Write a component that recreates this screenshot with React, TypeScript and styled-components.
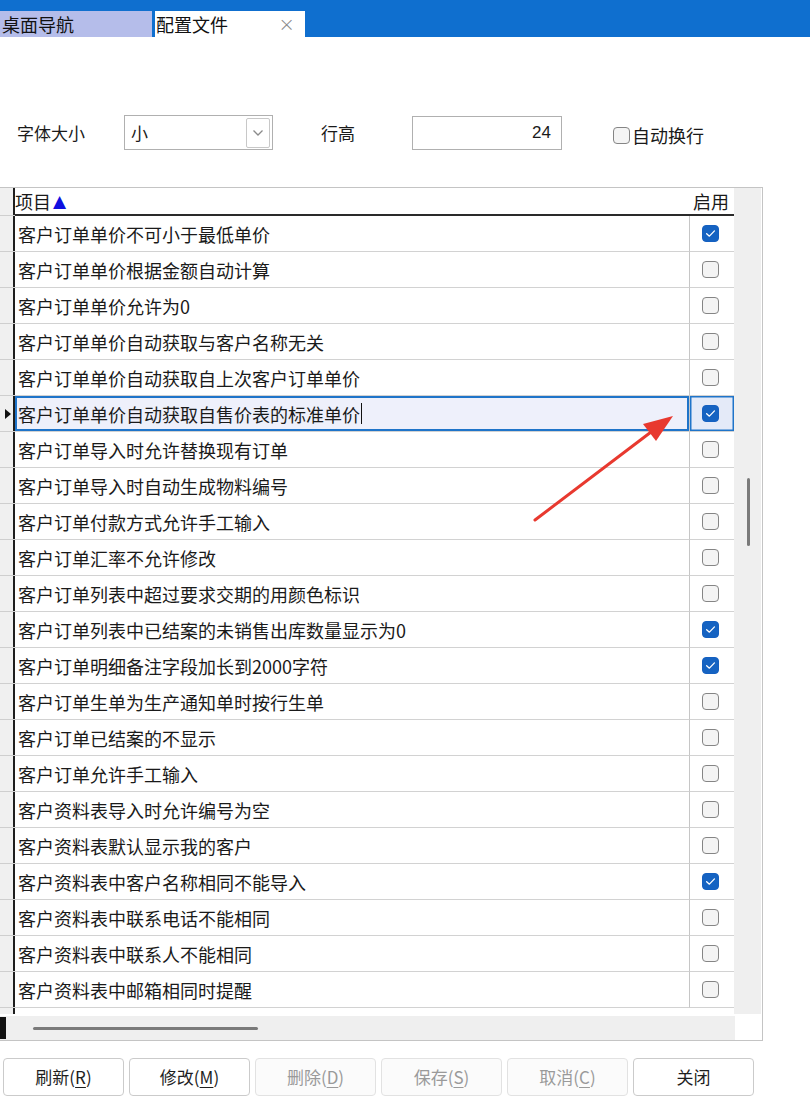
import * as React from "react";
import styled, { createGlobalStyle } from "styled-components";

const FONT = `"Noto Sans CJK SC", "Noto Sans", "Liberation Sans", sans-serif`;
const ROW_HEIGHT = 36;
const BLUE = "#0f6fcf";
const SELECT_BLUE = "#1f74c9";

interface OptionRow {
  label: string;
  enabled: boolean;
}

const rows: OptionRow[] = [
  { label: "客户订单单价不可小于最低单价", enabled: true },
  { label: "客户订单单价根据金额自动计算", enabled: false },
  { label: "客户订单单价允许为0", enabled: false },
  { label: "客户订单单价自动获取与客户名称无关", enabled: false },
  { label: "客户订单单价自动获取自上次客户订单单价", enabled: false },
  { label: "客户订单单价自动获取自售价表的标准单价", enabled: true },
  { label: "客户订单导入时允许替换现有订单", enabled: false },
  { label: "客户订单导入时自动生成物料编号", enabled: false },
  { label: "客户订单付款方式允许手工输入", enabled: false },
  { label: "客户订单汇率不允许修改", enabled: false },
  { label: "客户订单列表中超过要求交期的用颜色标识", enabled: false },
  { label: "客户订单列表中已结案的未销售出库数量显示为0", enabled: true },
  { label: "客户订单明细备注字段加长到2000字符", enabled: true },
  { label: "客户订单生单为生产通知单时按行生单", enabled: false },
  { label: "客户订单已结案的不显示", enabled: false },
  { label: "客户订单允许手工输入", enabled: false },
  { label: "客户资料表导入时允许编号为空", enabled: false },
  { label: "客户资料表默认显示我的客户", enabled: false },
  { label: "客户资料表中客户名称相同不能导入", enabled: true },
  { label: "客户资料表中联系电话不能相同", enabled: false },
  { label: "客户资料表中联系人不能相同", enabled: false },
  { label: "客户资料表中邮箱相同时提醒", enabled: false },
];

const SELECTED_INDEX = 5;

const GlobalStyle = createGlobalStyle`
  html, body {
    margin: 0;
    padding: 0;
    background: #ffffff;
    font-family: ${FONT};
    color: #1a1a1a;
  }
  * {
    box-sizing: border-box;
  }
`;

const Page = styled.div`
  position: relative;
  width: 810px;
  height: 1096px;
  overflow: hidden;
  font-size: 18px;
`;

const TitleBar = styled.div`
  height: 37px;
  background: ${BLUE};
  display: flex;
  align-items: flex-end;
  gap: 3px;
  padding-top: 11px;
`;

const Tab = styled.div<{ $active?: boolean; $width: number }>`
  width: ${(p) => p.$width}px;
  height: 26px;
  background: ${(p) => (p.$active ? "#ffffff" : "#b5bdea")};
  display: flex;
  align-items: center;
  justify-content: space-between;
  padding: 0 10px 0 ${(p) => (p.$active ? 1 : 2)}px;
  font-size: 18px;
  line-height: 26px;
  color: #111;
`;

const TabClose = styled.span`
  color: #8a8a8a;
  font-size: 20px;
  font-family: "DejaVu Sans", sans-serif;
  font-weight: 300;
`;

const Toolbar = styled.div`
  display: flex;
  align-items: center;
  height: 35px;
  margin-top: 78px;
  padding-left: 17px;
  font-size: 17px;
`;

const Label = styled.span<{ $gap: number }>`
  margin-right: ${(p) => p.$gap}px;
  line-height: 35px;
`;

const SelectBox = styled.div`
  width: 149px;
  height: 35px;
  border: 1px solid #b0b0b0;
  display: flex;
  align-items: center;
  justify-content: space-between;
  padding: 0 2px 0 6px;
  margin-right: 48px;
`;

const SelectArrow = styled.div`
  width: 24px;
  height: 30px;
  border: 1px solid #c8c8c8;
  border-radius: 2px;
  display: flex;
  align-items: center;
  justify-content: center;
`;

const NumberBox = styled.div`
  width: 150px;
  height: 34px;
  border: 1px solid #b0b0b0;
  display: flex;
  align-items: center;
  justify-content: flex-end;
  padding-right: 10px;
  font-family: "Liberation Sans", sans-serif;
  font-size: 17px;
  margin-right: 51px;
`;

const CheckLabel = styled.label`
  display: flex;
  align-items: center;
  gap: 2px;
  margin-top: 5px;
  font-size: 18px;
`;

const Box = styled.span<{ $checked?: boolean }>`
  width: 17px;
  height: 17px;
  border-radius: 4px;
  border: 1.5px solid ${(p) => (p.$checked ? "#1560c0" : "#858585")};
  background: ${(p) => (p.$checked ? "#1563c2" : "#f4f4f4")};
  display: inline-flex;
  align-items: center;
  justify-content: center;
`;

const GridFrame = styled.div`
  margin-top: 37px;
  width: 763px;
  border: 1px solid #c4c4c4;
  border-left: none;
  display: flex;
  flex-direction: column;
`;

const GridBody = styled.div`
  display: flex;
`;

const Table = styled.div`
  width: 734px;
  padding-bottom: 5px;
  background: linear-gradient(to right, #f0f0f0 13px, #1e1e1e 13px, #1e1e1e 15px, transparent 15px);
`;

const Row = styled.div`
  display: grid;
  grid-template-columns: 15px 1fr 44px;
`;

const IndicatorCell = styled.div<{ $header?: boolean }>`
  height: ${(p) => (p.$header ? 28 : ROW_HEIGHT)}px;
  border-bottom: 1px solid #cfcfcf;
  display: flex;
  align-items: center;
  justify-content: center;
  padding-right: 6px;
`;

const HeaderCell = styled.div<{ $right?: boolean }>`
  height: 28px;
  border-bottom: 2px solid #2a2a2a;
  display: flex;
  align-items: center;
  justify-content: ${(p) => (p.$right ? "flex-end" : "flex-start")};
  line-height: 26px;
  padding-right: ${(p) => (p.$right ? 5 : 0)}px;
`;

const SortArrow = styled.span`
  color: #1010e0;
  font-size: 17px;
  margin-left: 2px;
  font-family: "DejaVu Sans", sans-serif;
`;

const ItemCell = styled.div<{ $selected?: boolean }>`
  height: ${ROW_HEIGHT}px;
  display: flex;
  align-items: center;
  padding-left: 3px;
  border-bottom: 1px solid #d2d2d2;
  border-right: 1px solid #c6c6c6;
  background: ${(p) => (p.$selected ? "#eef0fb" : "#ffffff")};
  box-shadow: ${(p) => (p.$selected ? `inset 0 0 0 2px ${SELECT_BLUE}` : "none")};
  white-space: nowrap;
`;

const EnableCell = styled.div<{ $selected?: boolean }>`
  height: ${ROW_HEIGHT}px;
  display: flex;
  align-items: center;
  justify-content: center;
  padding-right: 4px;
  border-bottom: 1px solid #d2d2d2;
  background: ${(p) => (p.$selected ? "#e4eaf8" : "#ffffff")};
  box-shadow: ${(p) => (p.$selected ? `inset 0 0 0 1.5px ${SELECT_BLUE}` : "none")};
`;

const Caret = styled.span`
  width: 1px;
  height: 21px;
  background: #111;
  margin-left: 1px;
`;

const Pointer = styled.span`
  width: 0;
  height: 0;
  border-top: 5px solid transparent;
  border-bottom: 5px solid transparent;
  border-left: 6px solid #111;
  margin-left: 6px;
`;

const VScroll = styled.div`
  width: 27px;
  height: 826px;
  background: #efefef;
  display: flex;
  justify-content: center;
  padding-top: 290px;
`;

const VThumb = styled.div`
  width: 3px;
  height: 68px;
  border-radius: 2px;
  background: #7a7a7a;
  margin-left: 1px;
`;

const HScroll = styled.div`
  width: 735px;
  height: 24px;
  margin-top: 2px;
  background: #efefef;
  display: flex;
  align-items: center;
`;

const HEdge = styled.div`
  width: 6px;
  height: 22px;
  background: #111;
  margin-right: 27px;
`;

const HThumb = styled.div`
  width: 225px;
  height: 3px;
  border-radius: 2px;
  background: #7a7a7a;
`;

const ButtonBar = styled.div`
  display: flex;
  gap: 5px;
  margin-top: 17px;
  padding-left: 3px;
`;

const Button = styled.button<{ $disabled?: boolean }>`
  width: 121px;
  height: 38px;
  border: 1px solid ${(p) => (p.$disabled ? "#e2e2e2" : "#cbcbcb")};
  border-radius: 4px;
  background: ${(p) => (p.$disabled ? "#fbfbfb" : "#ffffff")};
  color: ${(p) => (p.$disabled ? "#9a9a9a" : "#1e1e1e")};
  font-family: ${FONT};
  font-size: 17px;
  padding: 0;
  line-height: 36px;
`;

const Mnemonic = styled.span`
  text-decoration: underline;
  text-underline-offset: 3px;
`;

const ArrowOverlay = styled.svg`
  position: absolute;
  left: 0;
  top: 0;
  pointer-events: none;
`;

function CheckBox({ checked }: { checked: boolean }) {
  return (
    <Box $checked={checked}>
      {checked && (
        <svg width="11" height="9" viewBox="0 0 10 8">
          <path d="M1.5 4.2 L4 6.4 L8.6 1.6" fill="none" stroke="#ffffff" strokeWidth="1.2" strokeLinecap="round" strokeLinejoin="round" />
        </svg>
      )}
    </Box>
  );
}

function ButtonLabel({ text, hotkey }: { text: string; hotkey?: string }) {
  if (!hotkey) return <>{text}</>;
  return (
    <>
      {text}(<Mnemonic>{hotkey}</Mnemonic>)
    </>
  );
}

export default function App() {
  const buttons = [
    { text: "刷新", hotkey: "R" },
    { text: "修改", hotkey: "M" },
    { text: "删除", hotkey: "D", disabled: true },
    { text: "保存", hotkey: "S", disabled: true },
    { text: "取消", hotkey: "C", disabled: true },
    { text: "关闭" },
  ];

  return (
    <Page>
      <GlobalStyle />
      <TitleBar>
        <Tab $width={152}>桌面导航</Tab>
        <Tab $active $width={150}>
          配置文件
          <TabClose>×</TabClose>
        </Tab>
      </TitleBar>

      <Toolbar>
        <Label $gap={39}>字体大小</Label>
        <SelectBox>
          <span>小</span>
          <SelectArrow>
            <svg width="12" height="8" viewBox="0 0 12 8">
              <path d="M1.5 1.5 L6 6 L10.5 1.5" fill="none" stroke="#8a8a8a" strokeWidth="1.3" />
            </svg>
          </SelectArrow>
        </SelectBox>
        <Label $gap={57}>行高</Label>
        <NumberBox>24</NumberBox>
        <CheckLabel>
          <CheckBox checked={false} />
          自动换行
        </CheckLabel>
      </Toolbar>

      <GridFrame>
        <GridBody>
          <Table>
            <Row>
              <IndicatorCell $header />
              <HeaderCell>
                项目<SortArrow>▲</SortArrow>
              </HeaderCell>
              <HeaderCell $right>启用</HeaderCell>
            </Row>
            {rows.map((row, index) => {
              const selected = index === SELECTED_INDEX;
              return (
                <Row key={row.label}>
                  <IndicatorCell>{selected && <Pointer />}</IndicatorCell>
                  <ItemCell $selected={selected}>
                    {row.label}
                    {selected && <Caret />}
                  </ItemCell>
                  <EnableCell $selected={selected}>
                    <CheckBox checked={row.enabled} />
                  </EnableCell>
                </Row>
              );
            })}
          </Table>
          <VScroll>
            <VThumb />
          </VScroll>
        </GridBody>
        <HScroll>
          <HEdge />
          <HThumb />
        </HScroll>
      </GridFrame>

      <ButtonBar>
        {buttons.map((b) => (
          <Button key={b.text} $disabled={b.disabled}>
            <ButtonLabel text={b.text} hotkey={b.hotkey} />
          </Button>
        ))}
      </ButtonBar>

      <ArrowOverlay width="810" height="1096" viewBox="0 0 810 1096">
        <line x1="535" y1="520" x2="655" y2="429" stroke="#e8392f" strokeWidth="3" strokeLinecap="round" />
        <polygon points="673,416 643,424 656,441" fill="#e8392f" />
      </ArrowOverlay>
    </Page>
  );
}
